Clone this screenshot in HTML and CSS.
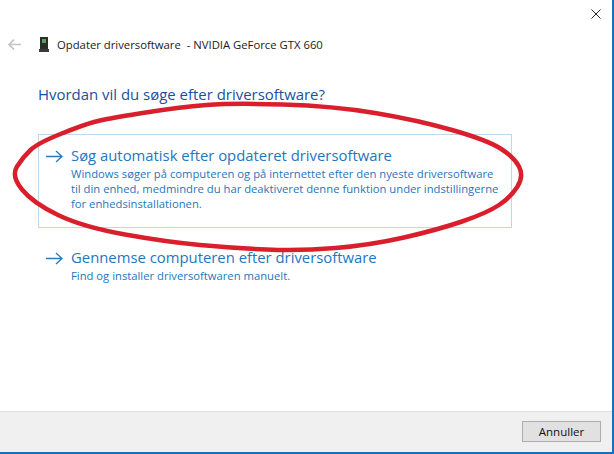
FILE: index.html
```html
<!DOCTYPE html>
<html lang="da">
<head>
<meta charset="utf-8">
<title>Opdater driversoftware</title>
<link rel="stylesheet" href="styles.css">
</head>
<body>
<div class="window">
  <div class="main">
    <div class="close-row">
      <svg class="close" width="10" height="10" viewBox="0 0 10 10"><path d="M.5.5l9 9M9.500.5l-9 9" stroke="#222" stroke-width="1" fill="none"/></svg>
    </div>
    <div class="title-row">
      <svg class="back" width="13" height="11" viewBox="0 0 13 11"><path d="M6 .7L1 5.500l5 4.800M1 5.500h12" stroke="#c4c4c4" stroke-width="1.600" fill="none"/></svg>
      <svg class="device" width="10" height="15" viewBox="0 0 10 15"><rect x="1" y="0" width="8" height="12" fill="#2c2c2c"/><rect x="3" y="2" width="4" height="4" fill="#4fa35a"/><rect x="0" y="12" width="10" height="3" fill="#3a3a3a"/></svg>
      <span class="title">Opdater driversoftware&nbsp; - NVIDIA GeForce GTX 660</span>
    </div>
    <h1 class="heading">Hvordan vil du søge efter driversoftware?</h1>
    <div class="option selected">
      <svg class="arrow" width="17" height="13" viewBox="0 0 17 13"><path d="M10 1l6 5.500-6 5.500M16 6.500H0" stroke="#2a7ac0" stroke-width="1.300" fill="none"/></svg>
      <div class="option-text">
        <div class="option-title">Søg automatisk efter opdateret driversoftware</div>
        <div class="option-desc">Windows søger på computeren og på internettet efter den nyeste driversoftware<br>til din enhed, medmindre du har deaktiveret denne funktion under indstillingerne<br>for enhedsinstallationen.</div>
      </div>
    </div>
    <div class="option">
      <svg class="arrow" width="17" height="13" viewBox="0 0 17 13"><path d="M10 1l6 5.500-6 5.500M16 6.500H0" stroke="#2a7ac0" stroke-width="1.300" fill="none"/></svg>
      <div class="option-text">
        <div class="option-title">Gennemse computeren efter driversoftware</div>
        <div class="option-desc">Find og installer driversoftwaren manuelt.</div>
      </div>
    </div>
  </div>
  <div class="footer"><button class="cancel">Annuller</button></div>
  <svg class="scribble" width="614" height="454" viewBox="0 0 614 454"><path d="M283 104.500Q333 106 375 113Q417 120 452 130Q487 140 500.500 148.500Q514 157 519 166.500Q524 176 517.500 186.500Q511 197 499 205Q487 213 462 221.500Q437 230 404 237.500Q371 245 335.500 248Q300 251 266.500 249.500Q233 248 200 245Q167 242 125 234.500Q83 227 58 215Q33 203 22 189.500Q11 176 17 166.500Q23 157 30.500 150Q38 143 60.500 134Q83 125 94 122Q105 119 142.500 113Q180 107 206.500 105Q233 103 283 104.500Z" fill="none" stroke="#da1f2c" stroke-width="4.500"/></svg>
</div>
</body>
</html>
```
FILE: styles.css
```css
html, body { margin: 0; padding: 0; }
body { width: 614px; height: 454px; background: #fff; overflow: hidden; font-family: "Open Sans", "Noto Sans", sans-serif; }
.window { position: relative; width: 614px; height: 454px; box-sizing: border-box; display: flex; flex-direction: column; border-right: 2px solid #1a6fb8; border-bottom: 2px solid #1a6fb8; }
.main { flex: 1; min-height: 0; padding-left: 38px; }
.close-row { display: flex; justify-content: flex-end; height: 18px; padding: 9px 11px 0 0; box-sizing: border-box; }
.close { display: block; }
.title-row { display: flex; align-items: center; margin-top: 17px; margin-left: -30px; height: 18px; }
.back { margin-right: 18px; }
.device { margin-right: 8px; }
.title { font-size: 11.3px; color: #1a1a1a; white-space: pre; }
.heading { margin: 31px 0 0; font-size: 14.95px; font-weight: 400; line-height: 20px; color: #1b4f9c; }
.option { display: flex; width: 465px; border: 1px solid transparent; margin-top: 30px; height: 92px; padding-left: 7px; }
.option.selected { border-color: #bcd9ec; }
.option + .option { margin-top: 8px; height: auto; }
.arrow { margin-top: 15px; margin-right: 8px; flex: none; }
.option-text { padding-top: 10px; }
.option-title { font-size: 14.85px; line-height: 20px; color: #1f76bd; white-space: nowrap; }
.option-desc { font-size: 11.25px; line-height: 15px; margin-top: 1px; color: #1f76bd; white-space: nowrap; }
.footer { height: 41px; flex: none; background: #f0f0f0; border-top: 1px solid #dfdfdf; display: flex; justify-content: flex-end; align-items: flex-start; padding: 9px 11px 0 0; box-sizing: border-box; }
.cancel { width: 79px; height: 21px; padding: 0; background: #e1e1e1; border: 1px solid #adadad; font-family: inherit; font-size: 11.5px; color: #111; }
.scribble { position: absolute; left: 0; top: 0; pointer-events: none; }
```
